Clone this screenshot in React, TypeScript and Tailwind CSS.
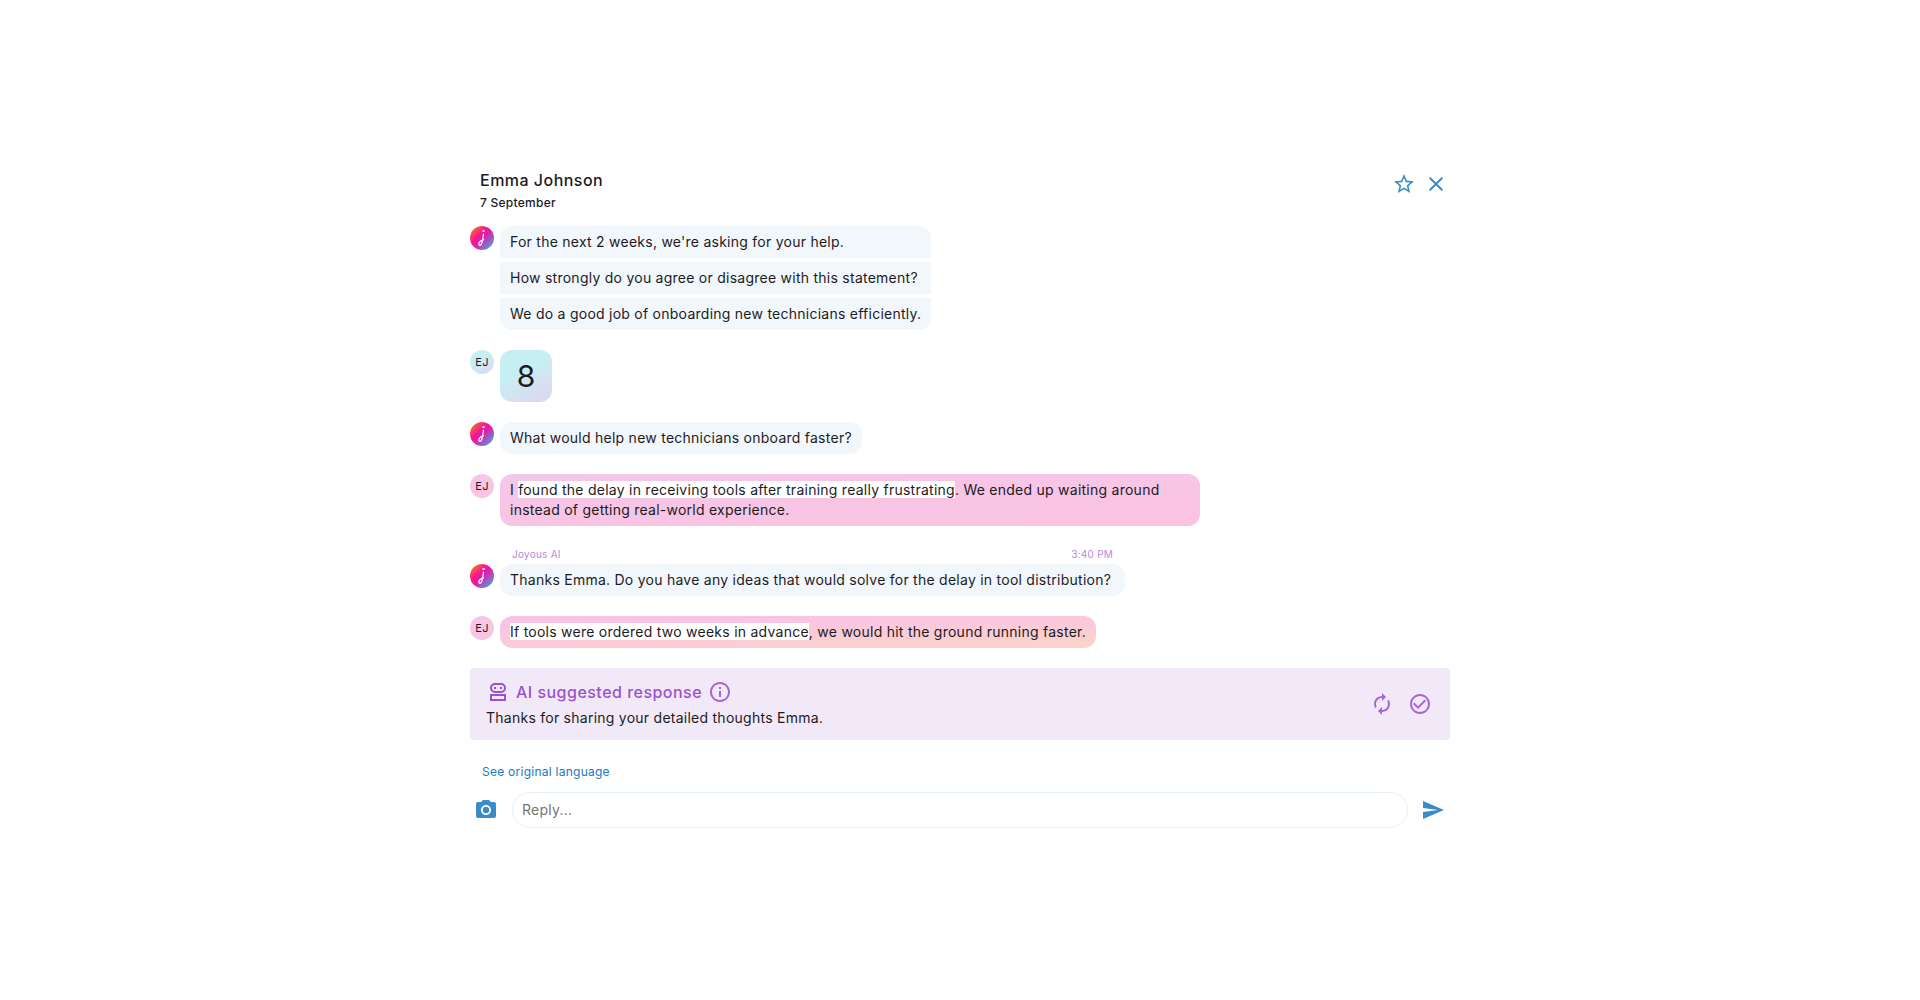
import type { ReactNode } from "react";
import {
  MdAutorenew,
  MdCheckCircleOutline,
  MdClose,
  MdInfoOutline,
  MdPhotoCamera,
  MdSend,
  MdStarBorder,
} from "react-icons/md";
import { clsx } from "clsx";

const font = "font-['Inter','Liberation_Sans',sans-serif]";

export default function App() {
  return (
    <div className={clsx(font, "min-h-screen bg-white flex items-center justify-center text-sm leading-5 tracking-[0.018em] text-[#1c1b1f]")}>
      <main className="w-full max-w-[980px] pb-1">
        <header className="flex items-start justify-between pl-2.5 pr-0.5 pb-3">
          <div>
            <h1 className="text-base leading-6 font-medium tracking-[0.03em]">Emma Johnson</h1>
            <p className="text-xs leading-[22px] font-medium">7 September</p>
          </div>
          <div className="flex items-center gap-2 pt-1 text-[#3b8bc6]">
            <button type="button" aria-label="Favourite">
              <MdStarBorder size={24} />
            </button>
            <button type="button" aria-label="Close">
              <MdClose size={24} />
            </button>
          </div>
        </header>

        <section className="flex flex-col gap-5" aria-label="Conversation">
          <Message avatar={<JoyousAvatar id="a1" />}>
            <div className="flex flex-col gap-1 rounded-xl overflow-hidden">
              <p className="bg-[#f2f7fb] px-2.5 py-1.5">For the next 2 weeks, we're asking for your help.</p>
              <p className="bg-[#f2f7fb] px-2.5 py-1.5">How strongly do you agree or disagree with this statement?</p>
              <p className="bg-[#f2f7fb] px-2.5 py-1.5">We do a good job of onboarding new technicians efficiently.</p>
            </div>
          </Message>

          <Message avatar={<Initials className="bg-linear-150 from-[#c6eff3] from-40% to-[#dcdaf1] to-85%" />}>
            <div className="size-[52px] rounded-xl flex items-center justify-center text-3xl tracking-normal bg-linear-150 from-[#c6eff3] from-40% to-[#dcdaf1] to-85%">
              8
            </div>
          </Message>

          <Message avatar={<JoyousAvatar id="a2" />}>
            <p className="bg-[#f2f7fb] rounded-xl px-2.5 py-1.5">What would help new technicians onboard faster?</p>
          </Message>

          <Message avatar={<Initials className="bg-linear-170 from-[#f4c7e8] to-[#fcc3e2]" />}>
            <p className="max-w-[700px] rounded-xl px-2.5 py-1.5 bg-linear-178 from-[#f4c7e9] to-[#fcc3e1]">
              I <mark className="bg-white text-inherit">found the delay in receiving tools after training really frustrating</mark>. We ended up waiting around instead of getting real-world experience.
            </p>
          </Message>

          <Message avatar={<JoyousAvatar id="a3" />} avatarClass="mt-[18px]">
            <div className="flex justify-between px-3 pb-0.5 text-[10px] leading-4 text-[#b987e0]">
              <span>Joyous AI</span>
              <time>3:40 PM</time>
            </div>
            <p className="bg-[#f2f7fb] rounded-xl pl-2.5 pr-3.5 py-1.5">
              Thanks Emma. Do you have any ideas that would solve for the delay in tool distribution?
            </p>
          </Message>

          <Message avatar={<Initials className="bg-[#f7c5e6]" />}>
            <p className="rounded-xl px-2.5 py-1.5 bg-linear-178 from-[#fac3e6] from-20% to-[#fcd4c6]">
              <mark className="bg-white text-inherit">If tools were ordered two weeks in advance</mark>, we would hit the ground running faster.
            </p>
          </Message>
        </section>

        <section className="mt-5 flex items-center justify-between rounded bg-[#f2e9f8] pl-4 pr-[18px] py-3">
          <div>
            <div className="flex items-center gap-1.5 text-[#9b51cf]">
              <RobotIcon />
              <h2 className="text-base leading-6 font-medium tracking-[0.03em]">AI suggested response</h2>
              <button type="button" aria-label="About AI suggestions" className="text-[#a965d6]">
                <MdInfoOutline size={24} />
              </button>
            </div>
            <p className="mt-1">Thanks for sharing your detailed thoughts Emma.</p>
          </div>
          <div className="flex items-center gap-3.5 text-[#a965d6]">
            <button type="button" aria-label="Regenerate">
              <MdAutorenew size={24} />
            </button>
            <button type="button" aria-label="Accept">
              <MdCheckCircleOutline size={24} />
            </button>
          </div>
        </section>

        <a href="#original" className="mt-6 ml-3 block w-fit text-xs leading-4 text-[#2079bd]">
          See original language
        </a>

        <form className="mt-3 flex items-center pl-1 pr-[5px] text-[#3b8bc6]">
          <button type="button" aria-label="Add photo">
            <MdPhotoCamera size={24} />
          </button>
          <input
            type="text"
            aria-label="Reply"
            placeholder="Reply..."
            className="ml-3.5 mr-[13px] h-9 min-w-0 flex-1 rounded-full border border-[#e3eff8] bg-white px-[9px] pb-0.5 text-[#1c1b1f] placeholder:text-[#757575] outline-none"
          />
          <button type="submit" aria-label="Send">
            <MdSend size={24} />
          </button>
        </form>
      </main>
    </div>
  );
}

function Message({ avatar, avatarClass, children }: { avatar: ReactNode; avatarClass?: string; children: ReactNode }) {
  return (
    <div className="flex items-start gap-1.5">
      <div className={clsx("shrink-0", avatarClass)}>{avatar}</div>
      <div className="min-w-0">{children}</div>
    </div>
  );
}

function Initials({ className }: { className: string }) {
  return (
    <div className={clsx("size-6 rounded-full flex items-center justify-center text-[11px] leading-4", className)}>
      EJ
    </div>
  );
}

function JoyousAvatar({ id }: { id: string }) {
  return (
    <svg width="24" height="24" viewBox="0 0 24 24" className="block" role="img" aria-label="Joyous">
      <defs>
        <linearGradient id={id} x1="3" y1="3" x2="21" y2="21" gradientUnits="userSpaceOnUse">
          <stop offset="0" stopColor="#f9692a" />
          <stop offset="0.35" stopColor="#f5139a" />
          <stop offset="0.55" stopColor="#dd22a8" />
          <stop offset="1" stopColor="#5598dd" />
        </linearGradient>
      </defs>
      <circle cx="12" cy="12" r="12" fill={`url(#${id})`} />
      <path
        d="M13.4 8 C13.2 11 12.7 14.6 11.9 17 C11.3 18.8 10.3 19.7 9.4 19.2 C8.2 18.4 8.9 16.4 10.4 15.2 C11.4 14.4 12.6 13.9 13.6 13.6"
        fill="none"
        stroke="#fff"
        strokeWidth="1.2"
        strokeLinecap="round"
        strokeLinejoin="round"
      />
      <path d="M12.9 5.1 L14.3 4.9" stroke="#fff" strokeWidth="1.5" strokeLinecap="round" />
    </svg>
  );
}

function RobotIcon() {
  return (
    <svg width="24" height="24" viewBox="0 0 24 24" fill="none" stroke="currentColor" strokeWidth="2" aria-hidden="true">
      <rect x="5" y="4" width="14" height="8" rx="4" />
      <rect x="5" y="15" width="14" height="5" />
      <rect x="8" y="7" width="2" height="2" fill="currentColor" stroke="none" />
      <rect x="14" y="7" width="2" height="2" fill="currentColor" stroke="none" />
    </svg>
  );
}
